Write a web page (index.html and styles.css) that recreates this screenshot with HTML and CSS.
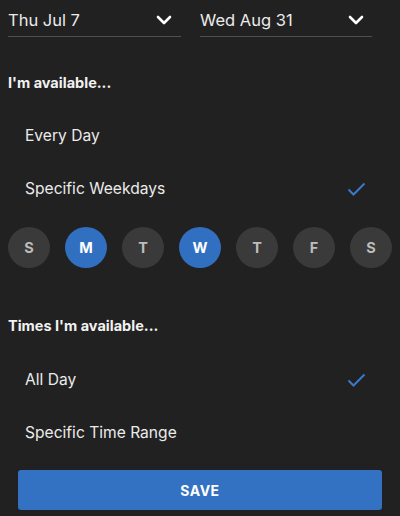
FILE: index.html
```html
<!DOCTYPE html>
<html lang="en">
<head>
    <meta charset="UTF-8">
    <meta name="viewport" content="width=device-width, initial-scale=1.0">
    <title>Availability</title>
    <link rel="stylesheet" href="styles.css">
</head>
<body>
    <div class="dates">
        <div class="select">
            <span>Thu Jul 7</span>
            <svg class="chevron" width="16" height="10" viewBox="0 0 16 10"><path d="M2 2l6 6 6-6" fill="none" stroke="#fff" stroke-width="2.6" stroke-linecap="round" stroke-linejoin="round"/></svg>
        </div>
        <div class="select">
            <span>Wed Aug 31</span>
            <svg class="chevron" width="16" height="10" viewBox="0 0 16 10"><path d="M2 2l6 6 6-6" fill="none" stroke="#fff" stroke-width="2.6" stroke-linecap="round" stroke-linejoin="round"/></svg>
        </div>
    </div>

    <h2 class="heading first">I'm available...</h2>
    <div class="option">Every Day</div>
    <div class="option">
        <span>Specific Weekdays</span>
        <svg class="check" width="19" height="14" viewBox="0 0 19 14"><path d="M1.5 7.5l5 5 11-11" fill="none" stroke="#3a78c9" stroke-width="2"/></svg>
    </div>

    <div class="days">
        <div class="day">S</div>
        <div class="day on">M</div>
        <div class="day">T</div>
        <div class="day on">W</div>
        <div class="day">T</div>
        <div class="day">F</div>
        <div class="day">S</div>
    </div>

    <h2 class="heading second">Times I'm available...</h2>
    <div class="option">
        <span>All Day</span>
        <svg class="check" width="19" height="14" viewBox="0 0 19 14"><path d="M1.5 7.5l5 5 11-11" fill="none" stroke="#3a78c9" stroke-width="2"/></svg>
    </div>
    <div class="option">Specific Time Range</div>

    <button class="save" type="button">SAVE</button>
</body>
</html>
```

FILE: styles.css
```css
html, body {
    margin: 0;
    height: 100%;
}

body {
    background-color: #212121;
    color: #ebebeb;
    font-family: Inter, "Noto Sans", sans-serif;
    padding: 0 8px;
    overflow: hidden;
}

.dates {
    display: flex;
    gap: 19px;
}

.select {
    width: 173px;
    height: 37px;
    box-sizing: border-box;
    padding: 4px 9px 0 0;
    border-bottom: 1px solid #4f4f4f;
    display: flex;
    align-items: center;
    justify-content: space-between;
    font-size: 16.5px;
}

.select + .select {
    width: 172px;
    padding-right: 8px;
}

.heading {
    margin: 0;
    height: 20px;
    line-height: 20px;
    font-size: 14.5px;
    font-weight: 700;
    color: #f2f2f2;
}

.heading.first {
    margin: 36px 0 16px;
}

.heading.second {
    margin: 48px 0 17px;
}

.option {
    height: 53px;
    padding: 0 26px 0 17px;
    display: flex;
    align-items: center;
    justify-content: space-between;
    font-size: 15.6px;
}

.days {
    display: flex;
    gap: 15px;
    margin: 12px 0 0;
}

.day {
    width: 42px;
    height: 41px;
    border-radius: 50%;
    background-color: #3a3a3a;
    color: #bdbdbd;
    display: flex;
    align-items: center;
    justify-content: center;
    font-size: 14.5px;
    font-weight: 700;
}

.day.on {
    background-color: #3170c1;
    color: #ffffff;
}

.save {
    display: block;
    width: 364px;
    height: 40px;
    margin: 11px 0 0 10px;
    border: none;
    border-radius: 3px;
    background-color: #3371c2;
    color: #ffffff;
    font-family: Inter, "Noto Sans", sans-serif;
    font-size: 14px;
    font-weight: 700;
    letter-spacing: 0.5px;
}
```
